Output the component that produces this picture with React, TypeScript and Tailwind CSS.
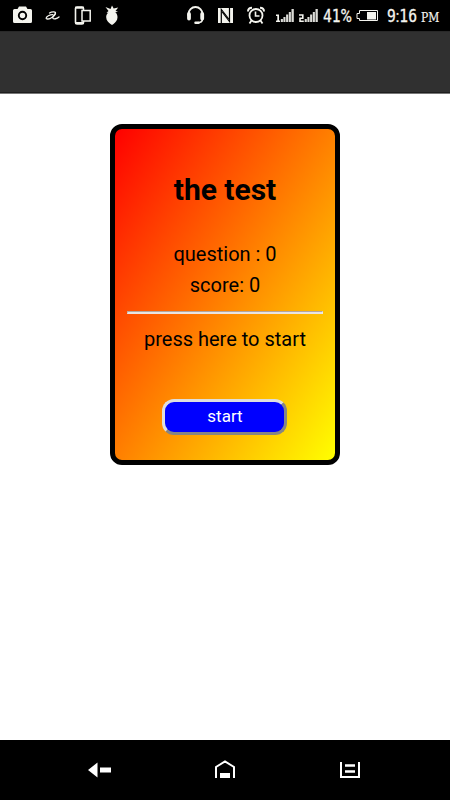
import React from "react";

function StatusBar() {
  return (
    <div className="flex h-[31px] shrink-0 items-start bg-black text-[#f4f4ee]">
      {/* camera */}
      <svg className="ml-[13px] h-[31px] w-[19px]" viewBox="13 0 19 31">
        <path d="M14.5 9h3l1.500-2.500h7L27.500 9h3q1.500 0 1.500 1.500v11q0 1.500-1.500 1.500h-16q-1.500 0-1.500-1.500v-11Q13 9 14.500 9z" fill="currentColor" />
        <circle cx="22.500" cy="15.500" r="3.700" fill="currentColor" stroke="#000" strokeWidth="1.900" />
      </svg>
      {/* swirl mark */}
      <svg className="ml-[13px] h-[31px] w-[15px]" viewBox="45 0 15 31" fill="none" stroke="currentColor" strokeLinecap="round">
        <path d="M49.500 13c2-1.200 6-1.700 6 0 0 1.500-3 4.200-5 5.300-2 1-4.500 1-4.300-.3.200-1.700 3.500-3.300 6.500-3.300" strokeWidth="1.300" />
        <path d="M55 14c-1.600 1.300-2.700 3.500-2 4.400.8 1 3.800.4 6-1.400" strokeWidth="1.400" />
      </svg>
      {/* phone and tablet */}
      <svg className="ml-[14px] h-[31px] w-[18px]" viewBox="74 0 18 31" fill="none" stroke="currentColor">
        <rect x="75.500" y="7" width="8" height="17" rx="1.500" strokeWidth="1.600" />
        <path d="M75 7.800h9M75 23h9" strokeWidth="2" />
        <rect x="82" y="10.500" width="8.200" height="10.500" fill="#000" strokeWidth="1.500" />
      </svg>
      {/* pineapple */}
      <svg className="ml-[12px] h-[31px] w-[16px]" viewBox="104 0 16 31" fill="currentColor">
        <path d="M105.500 7l5 2 1.500-3.500 1.700 3 4.500-1-2.700 3.500 2.500.500-4 1.500h-4l-3.500-.200 2-1.800z" />
        <path d="M112 11.500c3.800 0 5.500 2.400 5.500 5.800 0 3.200-2.200 5.400-4 6.700l-1.500 1-1.500-1c-2-1.300-4.300-3.500-4.300-6.700 0-3.300 2-5.800 5.800-5.800z" />
      </svg>
      {/* headset */}
      <svg className="ml-[66px] h-[31px] w-[19px]" viewBox="186 0 19 31" fill="none" stroke="currentColor">
        <path d="M188.500 16v-2a7 7 0 0 1 14 0v2" strokeWidth="1.900" />
        <path d="M189 14v4.500M202.200 14v4.500" strokeWidth="3.800" strokeLinecap="round" />
        <path d="M202.500 19c0 2.500-2 3.800-5.500 3.800" strokeWidth="1.600" />
        <path d="M195.500 22.700h3" strokeWidth="2.500" strokeLinecap="round" />
      </svg>
      {/* NFC */}
      <svg className="ml-[13px] h-[31px] w-[15px]" viewBox="218 0 15 31">
        <rect x="218" y="8" width="15" height="15" fill="currentColor" />
        <path d="M221.300 23V9.500l7.500 9.500" fill="none" stroke="#000" strokeWidth="1.200" />
        <path d="M229.500 8v13.500l-7.300-9.500" fill="none" stroke="#000" strokeWidth="1.200" />
      </svg>
      {/* alarm clock */}
      <svg className="ml-[14px] h-[31px] w-[18px]" viewBox="247 0 18 31" fill="none" stroke="currentColor">
        <circle cx="256" cy="15.500" r="6.500" strokeWidth="1.800" />
        <path d="M255.500 11.500v4.500h4" strokeWidth="1.600" />
        <path d="M248 11.500c0-2 1.500-3.700 4-3.700M264 11.500c0-2-1.500-3.700-4-3.700" strokeWidth="2" />
        <path d="M251.500 20.500l-2 3M260.500 20.500l2 3" strokeWidth="1.800" />
      </svg>
      {/* signal strength, first SIM */}
      <svg className="ml-[11px] h-[31px] w-[18px]" viewBox="276 0 18 31" fill="currentColor">
        <path d="M276 14.500h3v6h1V22h-4v-1.500h1.300V16H276z" />
        <path d="M280.800 19h2.100v3h-2.100zM283.400 17h2.100v5h-2.100zM286.100 14.500h2.100V22h-2.100zM288.800 12h2.100v10h-2.100zM291.500 9h2.300v13h-2.300z" opacity=".9" />
      </svg>
      {/* signal strength, second SIM */}
      <svg className="ml-[5px] h-[31px] w-[19px]" viewBox="299 0 19 31">
        <path d="M299 15h3.800v3.200h-2.800v3h3.800" fill="none" stroke="currentColor" strokeWidth="1.600" />
        <path d="M304.700 19h2.100v3h-2.100zM307.400 17h2.100v5h-2.100zM310.100 14.500h2.100V22h-2.100zM312.800 12h2.100v10h-2.100zM315.500 9h2.300v13h-2.300z" fill="currentColor" opacity=".9" />
      </svg>
      <span className="ml-[5px] w-[30px] font-['DejaVu_Sans_Mono',monospace] text-[17px] leading-[32px] whitespace-nowrap [-webkit-text-stroke:0.3px]">
        <span className="inline-block origin-left scale-x-[0.86]">
          41<span className="font-[Roboto,sans-serif] text-[18px]">%</span>
        </span>
      </span>
      {/* battery */}
      <svg className="ml-[3px] h-[31px] w-[22px]" viewBox="356 0 22 31" fill="none" stroke="currentColor">
        <path d="M359.500 10.500h18v10h-18v-2h-2.500v-5h2.500z" strokeWidth="1" />
        <rect x="367" y="12" width="9" height="7.500" fill="currentColor" stroke="none" />
      </svg>
      <span className="ml-[9px] w-[34px] font-['DejaVu_Sans_Mono',monospace] text-[17px] leading-[32px] whitespace-nowrap [-webkit-text-stroke:0.3px]">
        <span className="inline-block origin-left scale-x-[0.86]">
          9<span className="font-[Roboto,sans-serif]">:</span>16
        </span>
      </span>
      <span className="font-['DejaVu_Serif',serif] text-[12px] leading-[36px] whitespace-nowrap [-webkit-text-stroke:0.2px]">
        <span className="inline-block origin-left scale-x-[0.9]">PM</span>
      </span>
    </div>
  );
}

function QuizCard() {
  return (
    <section className="flex h-[341px] w-[230px] flex-col items-center rounded-[12px] border-[5px] border-black bg-[linear-gradient(to_bottom_right,red,yellow)] text-black">
      <h1 className="mt-[43px] text-[30px] leading-[36px] font-bold whitespace-nowrap">the test</h1>
      <p className="mt-[31px] text-[20px] leading-[31px] whitespace-nowrap">question : 0</p>
      <p className="text-[20px] leading-[31px] whitespace-nowrap">score: 0</p>
      <hr className="mt-[10px] h-[3px] w-[196px] border-t border-r border-b-[2px] border-l border-t-[#b5a59d] border-r-[#eeeeee] border-b-[#e9e4e2] border-l-[#c0a89c]" />
      <p className="mt-[10px] text-[20px] leading-[31px] whitespace-nowrap">press here to start</p>
      <button className="mt-[44px] mr-px h-[36px] w-[125px] rounded-[12px] border-[3px] border-t-[#dedede] border-r-[#858585] border-b-[#858585] border-l-[#dedede] bg-[blue] pb-[2px] pl-[1px] text-[17px] leading-none text-white">
        start
      </button>
    </section>
  );
}

function NavigationBar() {
  return (
    <nav className="flex h-[60px] shrink-0 items-start bg-black pl-[88px] text-white">
      <svg className="h-[60px] w-[24px]" viewBox="88 740 24 60" fill="currentColor">
        <path d="M88 770l9.500-7.500v15zM100 767.500h11v5h-11z" />
      </svg>
      <svg className="ml-[102px] h-[60px] w-[22px]" viewBox="214 740 22 60" fill="none" stroke="currentColor">
        <path d="M216 778v-11l9-5.500 9 5.500v11" strokeWidth="2" />
        <path d="M220 775.500h10" strokeWidth="5" />
      </svg>
      <svg className="ml-[103px] h-[60px] w-[22px]" viewBox="339 740 22 60" fill="none" stroke="currentColor" strokeWidth="2">
        <path d="M341 762v15h18v-15" />
        <path d="M345 765.500h10M345 771.500h10" strokeWidth="2.500" />
      </svg>
    </nav>
  );
}

export default function App() {
  return (
    <div className="flex h-[800px] w-[450px] flex-col overflow-hidden bg-white font-[Roboto,sans-serif]">
      <StatusBar />
      <header className="flex h-[63px] shrink-0 flex-col justify-end border-t border-b border-t-[#292929] border-b-[#777777] bg-[#303030]">
        <div className="h-px bg-[#1f1f1f]" />
      </header>
      <main className="flex flex-1 items-start justify-center pt-[30px]">
        <QuizCard />
      </main>
      <NavigationBar />
    </div>
  );
}
